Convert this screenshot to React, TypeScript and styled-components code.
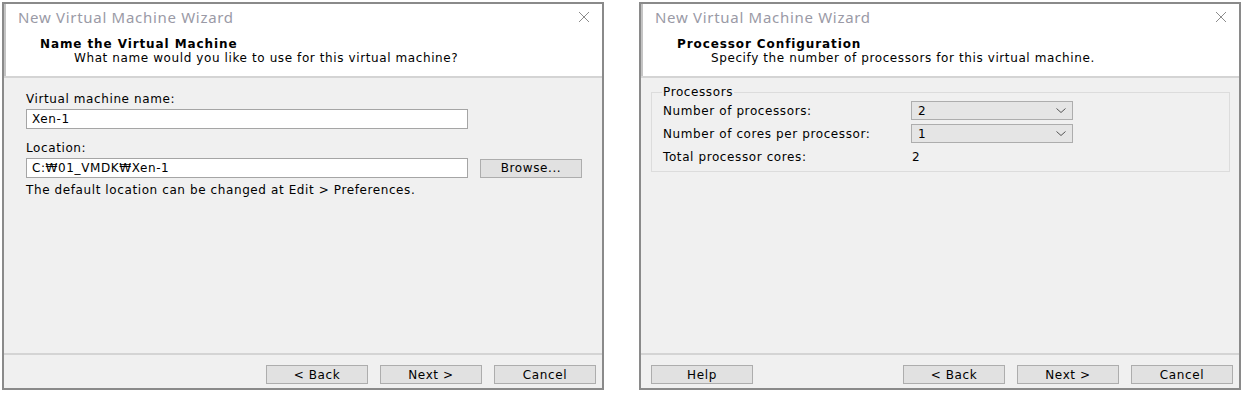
import React from 'react'
import styled, { createGlobalStyle } from 'styled-components'

const GlobalStyle = createGlobalStyle`
  html, body {
    margin: 0;
    padding: 0;
    background: #ffffff;
  }
  body {
    font-family: 'DejaVu Sans', Verdana, sans-serif;
    font-size: 12px;
    letter-spacing: 0.6px;
    color: #000;
  }
`

const Page = styled.div`
  display: flex;
  gap: 35px;
  padding: 2px 0 0 2px;
`

const Window = styled.div`
  width: 602px;
  height: 388px;
  box-sizing: border-box;
  border: 2px solid #8a8a8a;
  box-shadow: inset 2px 0 0 #c4c4c4;
  display: flex;
  flex-direction: column;
  background: #fff;
`

const TitleBar = styled.div`
  height: 26px;
  flex-shrink: 0;
  display: flex;
  align-items: center;
  justify-content: space-between;
  padding: 0 12px 0 14px;
  font-family: 'Noto Sans', 'Open Sans', sans-serif;
  font-size: 15px;
  letter-spacing: 0.7px;
  color: #9a9aa6;
`

const CloseIcon = () => (
  <svg width="12" height="12" viewBox="0 0 12 12">
    <path d="M1 1 L11 11 M11 1 L1 11" stroke="#8c8c8c" strokeWidth="1" fill="none" />
  </svg>
)

const Header = styled.div`
  height: 48px;
  flex-shrink: 0;
  box-sizing: border-box;
  padding: 7px 0 0 36px;
  border-bottom: 2px solid #d4d4d4;
`

const HeaderTitle = styled.div`
  font-weight: bold;
  font-size: 12px;
  letter-spacing: 0.9px;
  line-height: 14px;
`

const HeaderSub = styled.div`
  padding-left: 34px;
  line-height: 14px;
`

const Body = styled.div`
  flex: 1;
  background: #f0f0f0;
  padding: ${({ $pad }: { $pad: string }) => $pad};
`

const Footer = styled.div`
  flex-shrink: 0;
  background: #f0f0f0;
  border-top: 2px solid #d4d4d4;
  height: 35px;
  box-sizing: border-box;
  padding: 10px 6px 0 10px;
  display: flex;
  align-items: flex-start;
  gap: 12px;
`

const Spacer = styled.div`
  flex: 1;
`

const Button = styled.button`
  width: 102px;
  height: 19px;
  box-sizing: border-box;
  background: #e1e1e1;
  border: 1px solid #adadad;
  font-family: 'DejaVu Sans', Verdana, sans-serif;
  font-size: 12px;
  letter-spacing: 0.6px;
  color: #000;
  padding: 0;
`

const FieldLabel = styled.div`
  line-height: 14px;
  margin-bottom: 3px;
`

const TextBox = styled.div`
  width: 442px;
  height: 20px;
  box-sizing: border-box;
  background: #fff;
  border: 1px solid #a5a5a5;
  padding: 0 5px;
  display: flex;
  align-items: center;
`

const Row = styled.div`
  display: flex;
  align-items: center;
  gap: 12px;
`

const Hint = styled.div`
  margin-top: 5px;
  line-height: 14px;
`

const Field = styled.div`
  margin-bottom: 12px;
`

const Group = styled.fieldset`
  margin: 0;
  padding: 0 10px 3px 11px;
  border: 1px solid #dcdcdc;
  min-width: 0;
`

const Legend = styled.legend`
  padding: 0 1px;
  margin-left: -1px;
  line-height: 13px;
`

const GroupRow = styled.div`
  display: grid;
  grid-template-columns: 248px 162px;
  align-items: center;
  height: 23px;
`

const Select = styled.div`
  height: 19px;
  box-sizing: border-box;
  background: #e5e5e5;
  border: 1px solid #adadad;
  display: flex;
  align-items: center;
  justify-content: space-between;
  padding: 0 6px 0 5px;
`

const Chevron = () => (
  <svg width="10" height="6" viewBox="0 0 10 6">
    <path d="M0.5 0.5 L5 4.5 L9.5 0.5" stroke="#555" strokeWidth="1" fill="none" />
  </svg>
)

const Value = styled.span`
  padding-left: 1px;
`

export default function App() {
  return (
    <>
      <GlobalStyle />
      <Page>
        <Window>
          <TitleBar>
            <span>New Virtual Machine Wizard</span>
            <CloseIcon />
          </TitleBar>
          <Header>
            <HeaderTitle>Name the Virtual Machine</HeaderTitle>
            <HeaderSub>What name would you like to use for this virtual machine?</HeaderSub>
          </Header>
          <Body $pad="14px 20px 0 22px">
            <Field>
              <FieldLabel>Virtual machine name:</FieldLabel>
              <TextBox>Xen-1</TextBox>
            </Field>
            <FieldLabel>Location:</FieldLabel>
            <Row>
              <TextBox>C:₩01_VMDK₩Xen-1</TextBox>
              <Button>Browse...</Button>
            </Row>
            <Hint>The default location can be changed at Edit &gt; Preferences.</Hint>
          </Body>
          <Footer>
            <Spacer />
            <Button>&lt; Back</Button>
            <Button>Next &gt;</Button>
            <Button>Cancel</Button>
          </Footer>
        </Window>
        <Window>
          <TitleBar>
            <span>New Virtual Machine Wizard</span>
            <CloseIcon />
          </TitleBar>
          <Header>
            <HeaderTitle>Processor Configuration</HeaderTitle>
            <HeaderSub>Specify the number of processors for this virtual machine.</HeaderSub>
          </Header>
          <Body $pad="8px 9px 0 10px">
            <Group>
              <Legend>Processors</Legend>
              <GroupRow>
                <span>Number of processors:</span>
                <Select>
                  <Value>2</Value>
                  <Chevron />
                </Select>
              </GroupRow>
              <GroupRow>
                <span>Number of cores per processor:</span>
                <Select>
                  <Value>1</Value>
                  <Chevron />
                </Select>
              </GroupRow>
              <GroupRow>
                <span>Total processor cores:</span>
                <Value>2</Value>
              </GroupRow>
            </Group>
          </Body>
          <Footer>
            <Button>Help</Button>
            <Spacer />
            <Button>&lt; Back</Button>
            <Button>Next &gt;</Button>
            <Button>Cancel</Button>
          </Footer>
        </Window>
      </Page>
    </>
  )
}
